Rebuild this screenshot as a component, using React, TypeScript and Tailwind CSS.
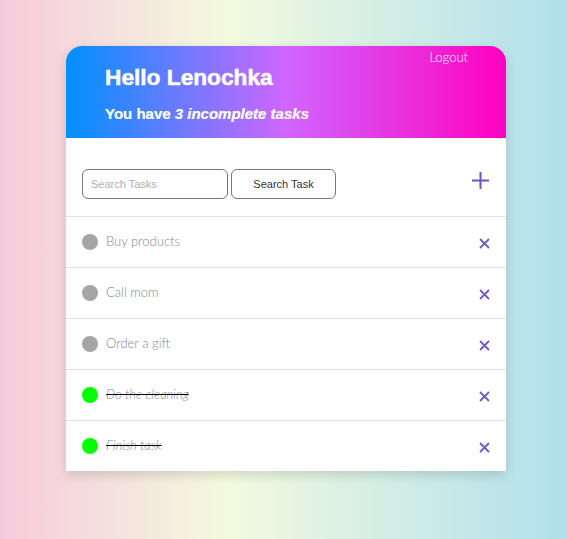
import React from "react";

const tasks = [
  { title: "Buy products", done: false },
  { title: "Call mom", done: false },
  { title: "Order a gift", done: false },
  { title: "Do the cleaning", done: true },
  { title: "Finish task", done: true },
];

function CloseIcon() {
  return (
    <svg width="11" height="11" viewBox="0 0 11 11" className="text-[#6a5acd]">
      <path d="M1 1L10 10M10 1L1 10" stroke="currentColor" strokeWidth="1.8" />
    </svg>
  );
}

export default function App() {
  const left = tasks.filter((t) => !t.done).length;
  return (
    <div className="min-h-[539px] w-full bg-[linear-gradient(90deg,#f7cadb_0%,#f3fadf_40%,#b0e0ec_100%)] pt-[46px] font-['Liberation_Sans',sans-serif]">
      <div className="ml-[66px] w-[440px] bg-white shadow-[0_4px_12px_rgba(0,0,0,0.15)] rounded-t-[16px]">
        <header className="relative h-[92px] rounded-t-[16px] bg-[linear-gradient(90deg,#0090ff_0%,#d066ff_50%,#ff00c0_100%)] pl-[39px] pt-[17px] text-white">
          <button className="absolute right-[38px] top-[2px] font-['Lato',sans-serif] text-[13px] font-light text-white">
            Logout
          </button>
          <h1 className="text-[22.7px] font-bold leading-[28px] [-webkit-text-stroke:0.5px_white]">
            Hello Lenochka
          </h1>
          <p className="mt-[14px] text-[15px] font-bold leading-[18px] [-webkit-text-stroke:0.2px_white]">
            You have <em>{left} incomplete tasks</em>
          </p>
        </header>

        <div className="flex h-[78px] items-start pl-4 pr-4 pt-[31px]">
          <input
            placeholder="Search Tasks"
            className="h-[30px] w-[146px] rounded-[6px] border border-[#777] px-2 text-[11px] placeholder:text-[#b0b0b0] outline-none"
          />
          <button className="ml-[3px] h-[30px] w-[105px] rounded-[6px] border border-[#777] text-[11px] text-[#333]">
            Search Task
          </button>
          <button className="ml-auto mt-[2px] text-[#6a4fc8]">
            <svg width="19" height="19" viewBox="0 0 19 19">
              <path d="M9.5 1V18M1 9.5H18" stroke="currentColor" strokeWidth="2" />
            </svg>
          </button>
        </div>

        <ul>
          {tasks.map((t) => (
            <li
              key={t.title}
              className="flex h-[51px] items-center border-t border-[#dde1e8] pl-4 pr-[16px]"
            >
              <span
                className={`h-4 w-4 rounded-full ${t.done ? "bg-[#00ff00]" : "bg-[#a5a5a5]"}`}
              />
              <span
                className={`ml-2 font-['Lato',sans-serif] text-[13px] font-light text-[#85879a] ${
                  t.done ? "italic line-through decoration-black decoration-[length:1px]" : ""
                }`}
              >
                {t.title}
              </span>
              <button className="ml-auto mt-[3px]">
                <CloseIcon />
              </button>
            </li>
          ))}
        </ul>
      </div>
    </div>
  );
}
